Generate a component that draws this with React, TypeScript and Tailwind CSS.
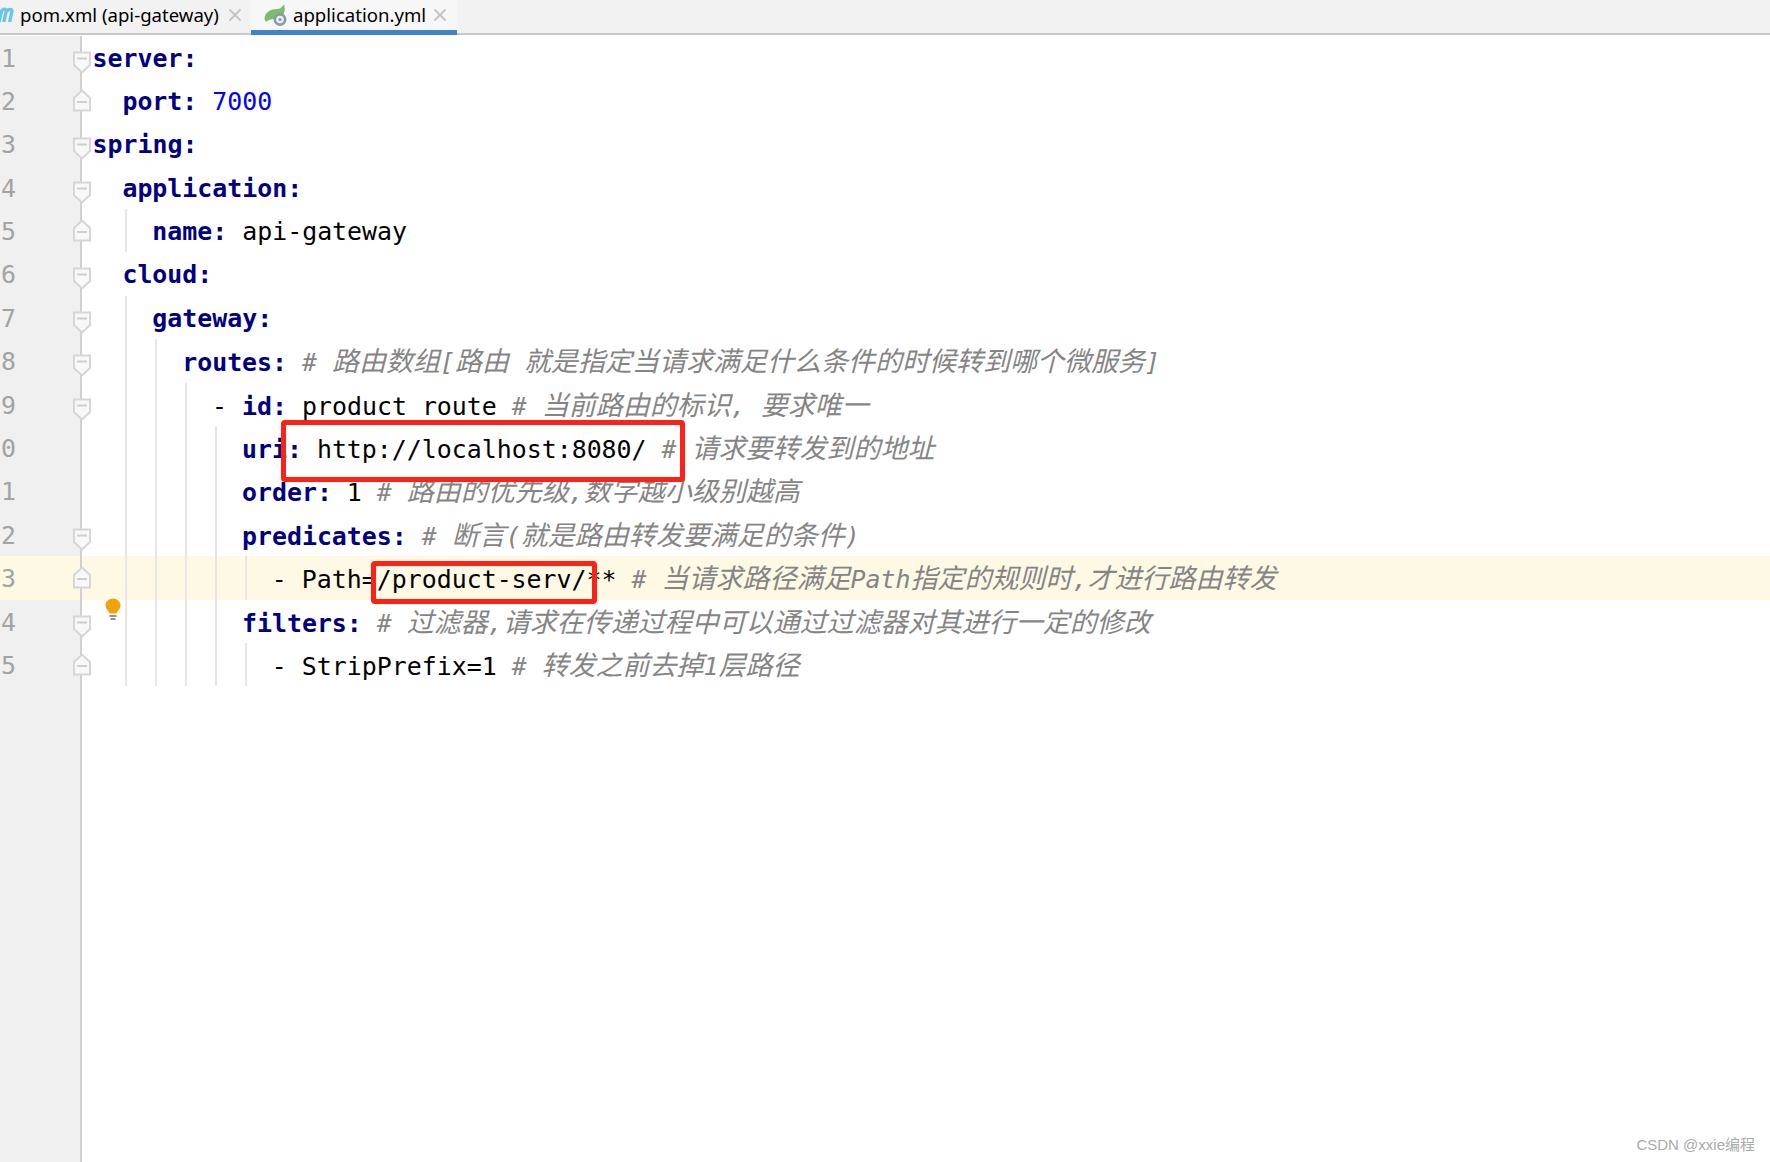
// application.yml opened in the IDE editor, with two red annotation boxes

type Kind = 'key' | 'text' | 'num' | 'comment';
type Token = [Kind, string];

interface Line {
  n: string;
  indent: number;
  fold?: 'start' | 'end';
  tokens: Token[];
}

const lines: Line[] = [
  { n: '1', indent: 0, fold: 'start', tokens: [['key', 'server:']] },
  { n: '2', indent: 2, fold: 'end', tokens: [['key', 'port:'], ['text', ' '], ['num', '7000']] },
  { n: '3', indent: 0, fold: 'start', tokens: [['key', 'spring:']] },
  { n: '4', indent: 2, fold: 'start', tokens: [['key', 'application:']] },
  { n: '5', indent: 4, fold: 'end', tokens: [['key', 'name:'], ['text', ' api-gateway']] },
  { n: '6', indent: 2, fold: 'start', tokens: [['key', 'cloud:']] },
  { n: '7', indent: 4, fold: 'start', tokens: [['key', 'gateway:']] },
  {
    n: '8',
    indent: 6,
    fold: 'start',
    tokens: [['key', 'routes:'], ['text', ' '], ['comment', '# 路由数组[路由 就是指定当请求满足什么条件的时候转到哪个微服务]']],
  },
  {
    n: '9',
    indent: 8,
    fold: 'start',
    tokens: [['text', '- '], ['key', 'id:'], ['text', ' product_route '], ['comment', '# 当前路由的标识, 要求唯一']],
  },
  {
    n: '0',
    indent: 10,
    tokens: [['key', 'uri:'], ['text', ' http://localhost:8080/ '], ['comment', '# 请求要转发到的地址']],
  },
  {
    n: '1',
    indent: 10,
    tokens: [['key', 'order:'], ['text', ' 1 '], ['comment', '# 路由的优先级,数字越小级别越高']],
  },
  {
    n: '2',
    indent: 10,
    fold: 'start',
    tokens: [['key', 'predicates:'], ['text', ' '], ['comment', '# 断言(就是路由转发要满足的条件)']],
  },
  {
    n: '3',
    indent: 12,
    fold: 'end',
    tokens: [['text', '- Path=/product-serv/** '], ['comment', '# 当请求路径满足Path指定的规则时,才进行路由转发']],
  },
  {
    n: '4',
    indent: 10,
    fold: 'start',
    tokens: [['key', 'filters:'], ['text', ' '], ['comment', '# 过滤器,请求在传递过程中可以通过过滤器对其进行一定的修改']],
  },
  {
    n: '5',
    indent: 12,
    fold: 'end',
    tokens: [['text', '- StripPrefix=1 '], ['comment', '# 转发之前去掉1层路径']],
  },
];

function CloseIcon() {
  return (
    <svg width="14" height="14" viewBox="0 0 14 14" className="shrink-0">
      <path d="M1.5 1.5 L12.5 12.5 M12.5 1.5 L1.5 12.5" stroke="#c4c4c4" strokeWidth="1.8" fill="none" />
    </svg>
  );
}

function MavenIcon() {
  return (
    <svg width="15" height="18" viewBox="0 0 15 18" className="shrink-0">
      <path
        d="M-1 16 L1.5 5 C3.5 2.5 6.5 2.5 6 6 L3.8 16 M6 6 C8.5 2.5 12.5 2.5 11.8 6 L9.6 16"
        stroke="#6cc4ea"
        strokeWidth="3.4"
        fill="none"
      />
    </svg>
  );
}

function SpringConfigIcon() {
  return (
    <svg width="23" height="22" viewBox="0 0 23 22" className="shrink-0">
      <path d="M0.5 15 C0.5 8 7 5 13 5 C16 5 18 3 20 0.5 C21.5 6 21 11 16 13 C11 16 6 14 2 18 Z" fill="#7ebb6a" />
      <circle cx="16" cy="15.5" r="6.5" fill="#8c99a6" />
      <circle cx="16" cy="15.5" r="3.8" fill="#eef1f3" />
      <circle cx="16" cy="15.5" r="1.6" fill="#8c99a6" />
    </svg>
  );
}

function FoldMarker({ type }: { type: 'start' | 'end' }) {
  if (type === 'start') {
    return (
      <svg width="20" height="23" viewBox="0 0 20 23" className="absolute left-[72px] top-[15px] z-10">
        <path d="M2 1.5 H18 V14 L10 21.5 L2 14 Z" fill="#f8f8f8" stroke="#d6d6d6" strokeWidth="2" />
        <path d="M5 7.5 H15" stroke="#cfcfcf" strokeWidth="2" />
      </svg>
    );
  }
  return (
    <svg width="20" height="23" viewBox="0 0 20 23" className="absolute left-[72px] top-[10px] z-10">
      <path d="M2 21.5 H18 V9 L10 1.5 L2 9 Z" fill="#f8f8f8" stroke="#d6d6d6" strokeWidth="2" />
      <path d="M5 13 H15" stroke="#cfcfcf" strokeWidth="2" />
    </svg>
  );
}

function BulbIcon() {
  return (
    <svg width="16" height="23" viewBox="0 0 16 23" className="absolute left-[105px] top-[-2px] z-10">
      <path d="M8 0.5 C12 0.5 15.5 3.5 15.5 7.5 C15.5 11 12.5 12.5 11.5 15.5 H4.5 C3.5 12.5 0.5 11 0.5 7.5 C0.5 3.5 4 0.5 8 0.5 Z" fill="#f0a30a" />
      <path d="M4.5 18 H11.5 M5.5 21 H10.5" stroke="#6e6e6e" strokeWidth="1.5" />
    </svg>
  );
}

function Comment({ value }: { value: string }) {
  const parts = value.split(/([\u3000-\u9fff\uff00-\uffef]+)/);
  return (
    <span className="italic text-[#858585]">
      {parts.map((part, i) =>
        i % 2 === 1 ? (
          <span key={i} className="text-[27px]">
            {part}
          </span>
        ) : (
          <span key={i}>{part}</span>
        ),
      )}
    </span>
  );
}

function CodeToken({ token }: { token: Token }) {
  const [kind, value] = token;
  if (kind === 'key') return <span className="font-bold text-[#000080]">{value}</span>;
  if (kind === 'num') return <span className="text-[#0000ff]">{value}</span>;
  if (kind === 'comment') return <Comment value={value} />;
  return <span className="text-black">{value}</span>;
}

function CodeRow({ line, index }: { line: Line; index: number }) {
  const current = index === 12;
  const cells = Array.from({ length: line.indent / 2 }, (_, i) => i);

  return (
    <div className={`relative flex h-[43.4px] shrink-0 ${current ? 'bg-[#fdf9e5]' : 'bg-white'}`}>
      <div className={`w-[80px] shrink-0 pl-[1px] text-[#a3a3a3] ${current ? 'bg-[#fdf9e5]' : 'bg-[#f0f0f0]'}`}>
        {line.n}
      </div>
      <div className="w-[2px] shrink-0 bg-[#d0d0d0]" />
      {line.fold && <FoldMarker type={line.fold} />}
      {index === 13 && <BulbIcon />}

      <div className="flex min-w-0 flex-1 pl-[10.5px]">
        {cells.map((cell) =>
          cell === 0 ? (
            <div key={cell} className="w-[29.9px] shrink-0" />
          ) : (
            <div key={cell} className="h-[43.4px] w-[29.9px] shrink-0">
              <div className="ml-[3px] h-full w-[2px] bg-[#e6e6e6]" />
            </div>
          ),
        )}
        <div className="whitespace-pre">
          {line.tokens.map((token, i) => (
            <CodeToken key={i} token={token} />
          ))}
        </div>
      </div>

      {index === 9 && (
        <div className="absolute left-[281px] top-[-6px] z-20 h-[62px] w-[404px] rounded-[4px] border-[5px] border-[#fd2116]" />
      )}
      {index === 12 && (
        <div className="absolute left-[371px] top-[5px] z-20 h-[43px] w-[226px] rounded-[4px] border-[5px] border-[#fd2116]" />
      )}
    </div>
  );
}

export default function App() {
  return (
    <div className="relative flex h-[1162px] w-[1770px] flex-col overflow-hidden bg-white">
      {/* tabs */}
      <div className="flex h-[35px] shrink-0 border-b-2 border-[#c9c9c9] bg-[#f2f2f2] font-['Noto_Sans',sans-serif] text-[18.6px] leading-[28px] text-black">
        <div className="flex h-[30px] w-[251px] shrink-0 items-center">
          <MavenIcon />
          <span className="ml-[5px] whitespace-pre">pom.xml (api-gateway)</span>
          <span className="ml-[9px]">
            <CloseIcon />
          </span>
        </div>
        <div className="flex h-[35px] w-[206px] shrink-0 items-center border-b-[5px] border-[#4083c9] bg-[#f7f7f7] pl-[13px]">
          <SpringConfigIcon />
          <span className="ml-[6px] whitespace-pre">application.yml</span>
          <span className="ml-[7px]">
            <CloseIcon />
          </span>
        </div>
      </div>

      {/* editor */}
      <div className="flex min-h-0 flex-1 flex-col pt-[0.5px] font-['DejaVu_Sans_Mono','Noto_Sans_CJK_SC',monospace] text-[24.9px] leading-[45px]">
        {lines.map((line, i) => (
          <CodeRow key={i} line={line} index={i} />
        ))}
        <div className="flex min-h-0 flex-1">
          <div className="w-[80px] shrink-0 bg-[#f0f0f0]" />
          <div className="w-[2px] shrink-0 bg-[#d0d0d0]" />
        </div>
      </div>

      <div className="absolute bottom-[6px] right-[15px] font-['Liberation_Sans','Noto_Sans_CJK_SC',sans-serif] text-[15px] text-[#aaaaaa]">
        CSDN @xxie编程
      </div>
    </div>
  );
}
